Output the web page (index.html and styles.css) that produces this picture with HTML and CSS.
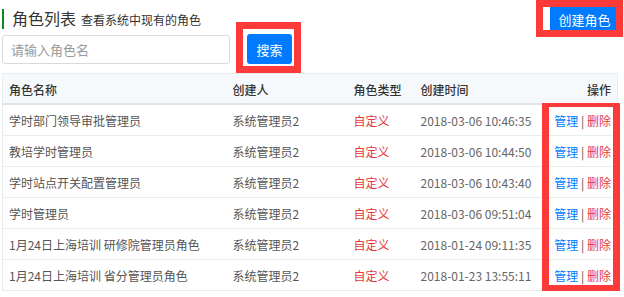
FILE: index.html
```html
<!DOCTYPE html>
<html lang="zh-CN">
<head>
    <meta charset="UTF-8">
    <meta name="viewport" content="width=device-width, initial-scale=1.0">
    <title>角色列表</title>
    <link rel="stylesheet" href="styles.css">
</head>
<body>
    <div class="page">
        <div class="top">
            <h1 class="title">角色列表<small>查看系统中现有的角色</small></h1>
            <span class="mark mark-create"><button class="btn btn-create">创建角色</button></span>
        </div>

        <div class="search">
            <input class="search-input" type="text" placeholder="请输入角色名">
            <span class="mark mark-search"><button class="btn btn-search">搜索</button></span>
        </div>

        <div class="list">
            <table class="roles">
                <colgroup>
                    <col style="width:224px">
                    <col style="width:121px">
                    <col style="width:67px">
                    <col style="width:126px">
                    <col>
                </colgroup>
                <thead>
                    <tr>
                        <th>角色名称</th>
                        <th>创建人</th>
                        <th>角色类型</th>
                        <th>创建时间</th>
                        <th class="ops">操作</th>
                    </tr>
                </thead>
                <tbody>
                    <tr>
                        <td>学时部门领导审批管理员</td>
                        <td>系统管理员2</td>
                        <td class="type">自定义</td>
                        <td class="time">2018-03-06 10:46:35</td>
                        <td class="ops"><a class="manage">管理</a> | <a class="remove">删除</a></td>
                    </tr>
                    <tr>
                        <td>教培学时管理员</td>
                        <td>系统管理员2</td>
                        <td class="type">自定义</td>
                        <td class="time">2018-03-06 10:44:50</td>
                        <td class="ops"><a class="manage">管理</a> | <a class="remove">删除</a></td>
                    </tr>
                    <tr>
                        <td>学时站点开关配置管理员</td>
                        <td>系统管理员2</td>
                        <td class="type">自定义</td>
                        <td class="time">2018-03-06 10:43:40</td>
                        <td class="ops"><a class="manage">管理</a> | <a class="remove">删除</a></td>
                    </tr>
                    <tr>
                        <td>学时管理员</td>
                        <td>系统管理员2</td>
                        <td class="type">自定义</td>
                        <td class="time">2018-03-06 09:51:04</td>
                        <td class="ops"><a class="manage">管理</a> | <a class="remove">删除</a></td>
                    </tr>
                    <tr>
                        <td>1月24日上海培训 研修院管理员角色</td>
                        <td>系统管理员2</td>
                        <td class="type">自定义</td>
                        <td class="time">2018-01-24 09:11:35</td>
                        <td class="ops"><a class="manage">管理</a> | <a class="remove">删除</a></td>
                    </tr>
                    <tr>
                        <td>1月24日上海培训 省分管理员角色</td>
                        <td>系统管理员2</td>
                        <td class="type">自定义</td>
                        <td class="time">2018-01-23 13:55:11</td>
                        <td class="ops"><a class="manage">管理</a> | <a class="remove">删除</a></td>
                    </tr>
                </tbody>
            </table>
            <div class="mark-ops"></div>
        </div>
    </div>
</body>
</html>
```

FILE: styles.css
```css
* {
    margin: 0;
    padding: 0;
    box-sizing: border-box;
}

body {
    font-family: "Noto Sans CJK SC", "Noto Sans", sans-serif;
    font-size: 12px;
    color: #555;
    background-color: #fff;
}

.page {
    padding: 7px 6px 0 2px;
}

.top {
    display: flex;
    justify-content: space-between;
    align-items: center;
}

.title {
    border-left: 2px solid #0a8a1a;
    padding-left: 8px;
    font-size: 16px;
    font-weight: normal;
    line-height: 18px;
    color: #333;
}

.title small {
    font-size: 12px;
    margin-left: 5px;
    color: #333;
}

.btn {
    font-family: inherit;
    font-size: 13px;
    color: #fff;
    background-color: #007bff;
    border: none;
    border-radius: 3px;
    cursor: pointer;
}

.btn-create {
    width: 69px;
    height: 24px;
    border-radius: 0;
    margin-right: -1px;
}

.btn-search {
    width: 45px;
    height: 30px;
}

.mark {
    position: relative;
    display: inline-flex;
}

.mark::after {
    content: "";
    position: absolute;
    border: 7px solid #fc3a3a;
    pointer-events: none;
}

.mark-create::after {
    top: -7px;
    left: -14px;
    right: -5px;
    bottom: -6px;
}

.mark-search::after {
    top: -12px;
    left: -11px;
    right: -9px;
    bottom: -9px;
}

.search {
    display: flex;
    align-items: center;
    gap: 17px;
    margin-top: 3px;
}

.search-input {
    width: 228px;
    height: 29px;
    padding: 0 8px;
    font-family: inherit;
    font-size: 13px;
    border: 1px solid #d9d9d9;
    border-radius: 3px;
    outline: none;
}

.search-input::placeholder {
    color: #9a9a9a;
}

.list {
    position: relative;
    margin-top: 9px;
}

.roles {
    width: 616px;
    table-layout: fixed;
    border-collapse: collapse;
    border: 1px solid #e9ecef;
}

.roles th,
.roles td {
    text-align: left;
    line-height: 18px;
    padding: 7px 6px 5px;
    white-space: nowrap;
    overflow: hidden;
}

.roles th {
    font-weight: 500;
    color: #333;
    background-color: #f6f9fc;
    padding-bottom: 4px;
    border-bottom: 2px solid #dfe3e8;
}

.roles td {
    border-bottom: 1px solid #e9ecef;
}

.roles .ops {
    text-align: right;
    padding-right: 6px;
}

.type {
    color: #e4393c;
}

.time {
    color: #666;
}

.manage {
    color: #007bff;
}

.remove {
    color: #e4393c;
}

.mark-ops {
    position: absolute;
    left: 540px;
    top: 30px;
    width: 78px;
    height: 189px;
    border: 7px solid #fc3a3a;
    border-top-width: 4px;
    pointer-events: none;
}
```
